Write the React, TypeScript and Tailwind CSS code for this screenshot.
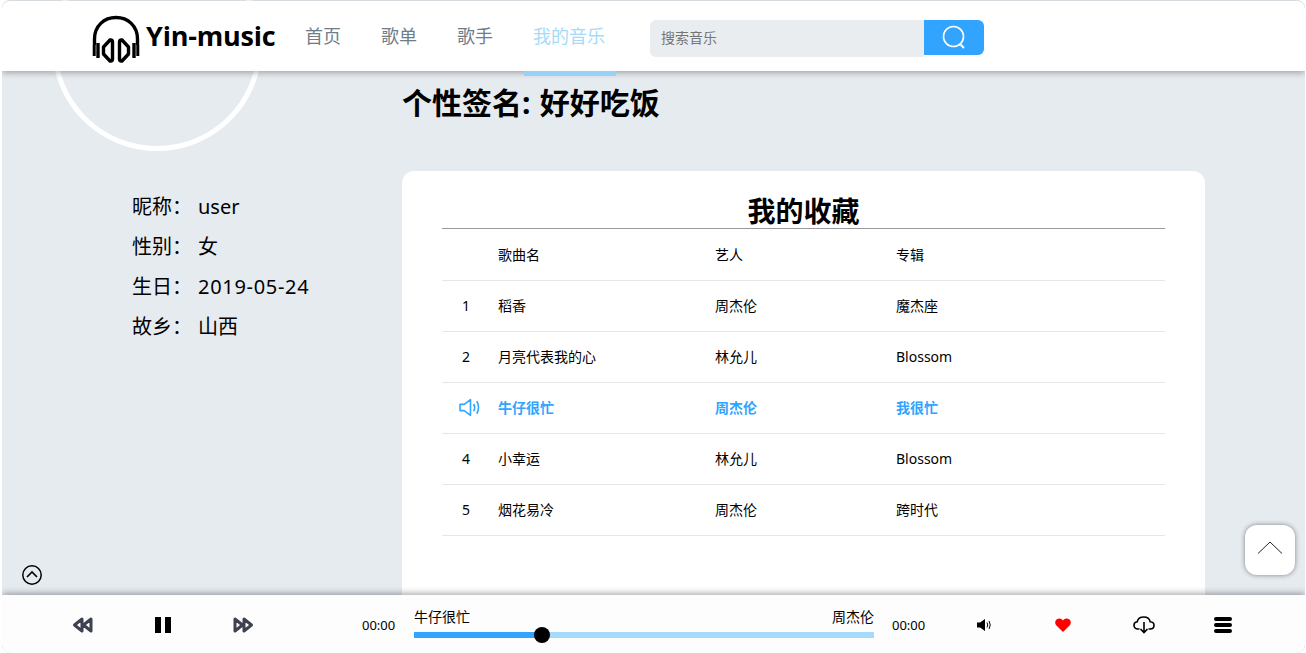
import React from "react";

const rows = [
  ["1", "稻香", "周杰伦", "魔杰座"],
  ["2", "月亮代表我的心", "林允儿", "Blossom"],
  ["3", "牛仔很忙", "周杰伦", "我很忙"],
  ["4", "小幸运", "林允儿", "Blossom"],
  ["5", "烟花易冷", "周杰伦", "跨时代"],
];

function Logo() {
  return (
    <svg width="50" height="50" viewBox="0 0 50 50" fill="none" className="mt-[6px] shrink-0">
      <path d="M4.5 31 V25 C4.5 12 14 3.5 26 3.5 C38 3.5 47.5 12 47.5 25 V31" stroke="#000" strokeWidth="3.4" />
      <path d="M4.2 31 V42 M47.8 31 V42" stroke="#000" strokeWidth="3" />
      <path d="M8 29 V44 M44 29 V44" stroke="#000" strokeWidth="3.4" />
      <path d="M20 26 L13.5 33 V40 L20 47 C22 47.5 22.5 46 22.5 45 V28 C22.5 27 22 25.5 20 26 Z" stroke="#000" strokeWidth="3.4" strokeLinejoin="round" />
      <path d="M32 26 L38.5 33 V40 L32 47 C30 47.5 29.5 46 29.5 45 V28 C29.5 27 30 25.5 32 26 Z" stroke="#000" strokeWidth="3.4" strokeLinejoin="round" />
    </svg>
  );
}

export default function App() {
  return (
    <div className="relative h-[653px] w-[1306px] overflow-hidden bg-white font-['Noto_Sans','Noto_Sans_CJK_SC',sans-serif] text-black">
      <div className="ml-[2px] flex h-full w-[1303px] flex-col overflow-hidden rounded-lg bg-[#e6ebf0]">
        <header className="relative z-20 mt-[1px] flex h-[70px] shrink-0 items-center rounded-t-lg bg-white pl-[88px] shadow-[0_2px_6px_rgba(0,0,0,0.3)]">
          <div className="flex w-[186px] items-center gap-[6px]">
            <Logo />
            <span className="-mt-[2px] whitespace-nowrap font-['Open_Sans',sans-serif] text-[27px] font-bold leading-none tracking-[-0.2px]">Yin-music</span>
          </div>
          <nav className="ml-[29px] flex text-[18px] text-[#6f7d8a]">
            <a className="w-[76px]">首页</a>
            <a className="w-[76px]">歌单</a>
            <a className="w-[76px]">歌手</a>
            <a className="relative w-[73px] whitespace-nowrap text-[#a5dbf8]">
              我的音乐
              <span className="absolute -left-[9px] top-[48px] h-[5px] w-[92px] bg-[#95d2f6]" />
            </a>
          </nav>
          <div className="ml-[44px] mt-[4px] flex h-[37px] w-[334px] items-start">
            <div className="flex h-[37px] w-[274px] items-center rounded-l-md bg-[#e9edf0] pb-[2px] pl-[11px] text-[14px] text-[#757575]">搜索音乐</div>
            <div className="flex h-[35px] w-[60px] items-center justify-center rounded-r-md bg-[#30a4ff]">
              <svg width="24" height="24" viewBox="0 0 24 24" fill="none" stroke="#fff" strokeWidth="1.6">
                <circle cx="11.5" cy="11.5" r="10" />
                <path d="M18 19 L22 23" strokeWidth="2" />
              </svg>
            </div>
          </div>
        </header>

        <main className="relative flex min-h-0 flex-1">
          <aside className="w-[400px] shrink-0">
            <div className="ml-[50px] -mt-[130px] h-[210px] w-[210px] rounded-full border-[5px] border-white" />
            <dl className="ml-[130px] mt-[36px] text-[20px] leading-[40px]">
              <div className="flex"><dt className="w-[66px]">昵称：</dt><dd>user</dd></div>
              <div className="flex"><dt className="w-[66px]">性别：</dt><dd>女</dd></div>
              <div className="flex"><dt className="w-[66px]">生日：</dt><dd className="tracking-[0.7px]">2019-05-24</dd></div>
              <div className="flex"><dt className="w-[66px]">故乡：</dt><dd>山西</dd></div>
            </dl>
          </aside>
          <section className="w-[803px] shrink-0">
            <h1 className="mt-[10px] h-[46px] whitespace-nowrap text-[30px] font-bold leading-[44px] [word-spacing:1.5px]">个性签名: 好好吃饭</h1>
            <div className="mt-[44px] h-[440px] rounded-t-xl bg-white px-[40px]">
              <h2 className="h-[58px] border-b border-[#999] pt-[20px] text-center text-[28px] font-bold leading-[40px]">我的收藏</h2>
              <div className="text-[14px]">
                <div className="flex h-[52px] items-center border-b border-[#e4e6e8]">
                  <span className="w-[56px]" />
                  <span className="w-[217px]">歌曲名</span>
                  <span className="w-[181px]">艺人</span>
                  <span>专辑</span>
                </div>
                {rows.map((r, i) => (
                  <div key={r[0]} className={`flex h-[51px] items-center border-b border-[#e4e6e8] pb-[2px] ${i === 2 ? "font-bold text-[#30a4ff]" : ""}`}>
                    <span className="flex w-[56px] justify-center pr-[8px]">
                      {i === 2 ? (
                        <svg width="23" height="19" viewBox="0 0 22 18" fill="none" stroke="#30a4ff" strokeWidth="1.5" className="ml-[8px] shrink-0">
                          <path d="M1 6 H5 L11 1.5 V16.5 L5 12 H1 Z" strokeLinejoin="round" />
                          <path d="M14 5.5 Q16 9 14 12.5 M17 3 Q20.5 9 17 15" />
                        </svg>
                      ) : r[0]}
                    </span>
                    <span className="w-[217px]">{r[1]}</span>
                    <span className="w-[181px]">{r[2]}</span>
                    <span>{r[3]}</span>
                  </div>
                ))}
              </div>
            </div>
          </section>
          <button className="absolute left-[1243px] top-[454px] flex h-[50px] w-[50px] items-center justify-center rounded-xl bg-white shadow-[0_0_5px_rgba(0,0,0,0.45)]">
            <svg width="26" height="13" viewBox="0 0 26 13" fill="none" stroke="#222" strokeWidth="1" className="-mt-[5px]"><path d="M1 12.5 L13 1 L25 12.5" /></svg>
          </button>
          <svg width="22" height="22" viewBox="0 0 22 22" fill="none" stroke="#000" strokeWidth="1.5" className="absolute left-[19px] top-[493px]">
            <circle cx="11" cy="11" r="9.2" />
            <path d="M6 13 L11 8 L16 13" strokeWidth="1.7" />
          </svg>
        </main>

        <footer className="relative z-20 flex h-[58px] shrink-0 items-center rounded-b-lg bg-[#fdfdfd] pt-[2px] shadow-[0_-2px_6px_rgba(0,0,0,0.32)]">
          <div className="ml-[70px] flex w-[290px] items-center">
            <svg width="22" height="18" viewBox="0 0 22 18" fill="none" stroke="#3d4150" strokeWidth="3" strokeLinejoin="round"><path d="M10 3 L2.5 9 L10 15 Z M19 3 L11.5 9 L19 15 Z" /></svg>
            <div className="ml-[61px] flex w-[16px] justify-between"><span className="h-[16px] w-[6px] bg-black" /><span className="h-[16px] w-[6px] bg-black" /></div>
            <svg width="22" height="18" viewBox="0 0 22 18" fill="none" stroke="#3d4150" strokeWidth="3" strokeLinejoin="round" className="ml-[61px]"><path d="M3 3 L10.5 9 L3 15 Z M12 3 L19.5 9 L12 15 Z" /></svg>
          </div>
          <span className="mt-[2px] w-[52px] text-[13px]">00:00</span>
          <div className="-mt-[5px] w-[460px]">
            <div className="flex justify-between text-[14px] leading-[20px]"><span>牛仔很忙</span><span>周杰伦</span></div>
            <div className="relative mt-[5px] h-[6px] bg-[#a5dbf8]">
              <div className="h-full w-[128px] bg-[#30a4ff]" />
              <span className="absolute left-[120px] -top-[5px] h-[16px] w-[16px] rounded-full bg-black" />
            </div>
          </div>
          <span className="ml-[18px] mt-[2px] w-[84px] text-[13px]">00:00</span>
          <svg width="16" height="14" viewBox="0 0 16 14" className="shrink-0">
            <path d="M1 4.5 H4 L9 1 V13 L4 9.5 H1 Z" fill="#000" />
            <path d="M11 4.5 Q12.5 7 11 9.5 M13 3 Q15.5 7 13 11" stroke="#000" fill="none" strokeWidth="1" />
          </svg>
          <svg width="16" height="14" viewBox="0 0 16 14" className="ml-[63px] shrink-0"><path d="M8 14 L1.2 7.2 C-1 4.5 .6 .6 4 .4 C5.8 .3 7.2 1.2 8 2.6 C8.8 1.2 10.2 .3 12 .4 C15.4 .6 17 4.5 14.8 7.2 Z" fill="#ff0000" /></svg>
          <svg width="22" height="18" viewBox="0 0 22 18" fill="none" stroke="#000" strokeWidth="1.6" className="ml-[62px] shrink-0">
            <path d="M6.5 13 H5 C2.5 13 1 11.4 1 9.3 C1 7.4 2.4 6 4.2 5.8 C4.8 3 7.4 1 10.8 1 C14.4 1 16.6 3 17.2 5.8 C19.5 6 21 7.4 21 9.3 C21 11.4 19.5 13 17 13 H15.5" />
            <path d="M11 6 V16 M7.5 13 L11 16.6 L14.5 13" />
          </svg>
          <div className="ml-[59px] flex w-[18px] flex-col gap-[2px]">
            <span className="h-[4px] rounded-sm bg-black" /><span className="h-[4px] rounded-sm bg-black" /><span className="h-[4px] rounded-sm bg-black" />
          </div>
        </footer>
      </div>
    </div>
  );
}
